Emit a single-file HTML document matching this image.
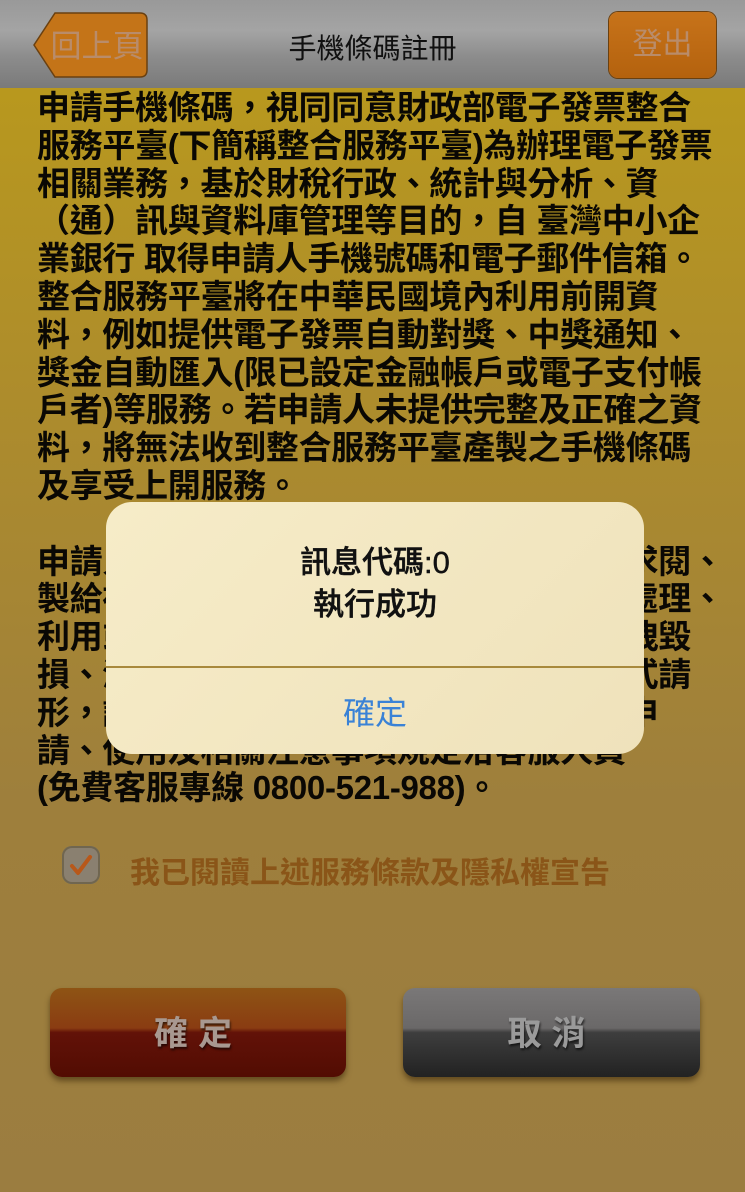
<!DOCTYPE html>
<html><head><meta charset="utf-8"><style>
html,body{margin:0;padding:0;}
body{width:745px;height:1192px;position:relative;overflow:hidden;font-family:"Liberation Sans","Noto Sans CJK TC",sans-serif;
background:linear-gradient(#b8981e 88px,#ad8c2c 400px,#9e7f3c 800px,#9b7d40 1192px);}
.nav{position:absolute;left:0;top:0;width:745px;height:88px;background:linear-gradient(#999,#a4a4a4 35%,#8c8c8c 65%,#7a7a7a);}
.title{position:absolute;left:0;width:745px;top:27px;text-align:center;font-size:28px;color:#101010;}
.back{position:absolute;left:33px;top:12px;width:115px;height:66px;}
.logout{position:absolute;left:609px;top:12px;width:107px;height:66px;border-radius:9px;background:linear-gradient(#c7731a,#b4620e);box-shadow:0 0 0 1px #6a4010;color:#b98c6a;font-size:30px;text-align:center;line-height:66px;}
.txt{position:absolute;left:37px;top:89px;font-size:33px;font-weight:bold;line-height:37.8px;color:#0a0804;white-space:nowrap;letter-spacing:-0.3px;}
.dlg{position:absolute;left:106px;top:502px;width:538px;height:252px;border-radius:26px;background:linear-gradient(135deg,#f6ecc8,#efe2bb);}
.dlg .m{position:absolute;top:40px;width:100%;text-align:center;font-size:31px;font-weight:500;line-height:42px;color:#111;-webkit-text-stroke:0.4px #111;}
.dlg .sep{position:absolute;top:164px;left:0;width:100%;height:1.5px;background:#a8893c;}
.dlg .ok{position:absolute;top:186px;width:100%;text-align:center;font-size:32px;color:#3a82d6;}
.cb{position:absolute;left:62px;top:846px;width:38px;height:38px;border-radius:10px;background:#8a8070;box-shadow:inset 0 0 0 2px #706650;}
.cbt{position:absolute;left:130px;top:848px;font-size:30px;font-weight:bold;color:#8a5518;}
.btn{position:absolute;top:988px;height:89px;border-radius:12px;text-align:center;line-height:92px;font-size:34px;font-weight:bold;letter-spacing:10px;box-shadow:0 4px 6px rgba(60,40,10,.6);text-shadow:1px 2px 2px rgba(0,0,0,.6);}
.b1{left:50px;width:296px;background:linear-gradient(#8e5414,#8a3c12 45%,#621208 50%,#520c02);color:#a89890;}
.b2{left:403px;width:297px;background:linear-gradient(#7a7878,#6a6868 45%,#3e3e3e 50%,#222);color:#9a9a9a;}
</style></head><body>
<div class="nav">
<svg class="back" viewBox="0 0 115 66"><path d="M22 1 H107 Q114 1 114 8 V58 Q114 65 107 65 H22 L1 33 Z" fill="#c47418" stroke="#6a4010" stroke-width="1.5"/><text x="64" y="45" font-size="31" fill="#b98c6a" text-anchor="middle" font-family="Noto Sans CJK TC">回上頁</text></svg>
<div class="title">手機條碼註冊</div>
<div class="logout">登出</div>
</div>
<div class="txt">申請手機條碼，視同同意財政部電子發票整合<br>服務平臺(下簡稱整合服務平臺)為辦理電子發票<br>相關業務，基於財稅行政、統計與分析、資<br>（通）訊與資料庫管理等目的，自 臺灣中小企<br>業銀行 取得申請人手機號碼和電子郵件信箱。<br>整合服務平臺將在中華民國境內利用前開資<br>料，例如提供電子發票自動對獎、中獎通知、<br>獎金自動匯入(限已設定金融帳戶或電子支付帳<br>戶者)等服務。若申請人未提供完整及正確之資<br>料，將無法收到整合服務平臺產製之手機條碼<br>及享受上開服務。<br>&nbsp;<br>申請人得依個人資料保護法規定查詢或請求閱、<br>製給複製本、請求補充或更正、請求停止處理、<br>利用或刪除之權利。如發生資料被竊取、洩毀<br>損、滅失或其他侵害情事時，將以適當方式請<br>形，請依電子發票整合服務平臺手機條碼申<br>請、使用及相關注意事項規定洽客服人員<br>(免費客服專線 0800-521-988)。</div>
<div class="dlg"><div class="m">訊息代碼:0<br>執行成功</div><div class="sep"></div><div class="ok">確定</div></div>
<div class="cb"><svg width="38" height="38" viewBox="0 0 38 38"><path d="M10 20 L16 27 L28 11" fill="none" stroke="#b8581a" stroke-width="4" stroke-linecap="round" stroke-linejoin="round"/></svg></div>
<div class="cbt">我已閱讀上述服務條款及隱私權宣告</div>
<div class="btn b1">確定</div>
<div class="btn b2">取消</div>
</body></html>
